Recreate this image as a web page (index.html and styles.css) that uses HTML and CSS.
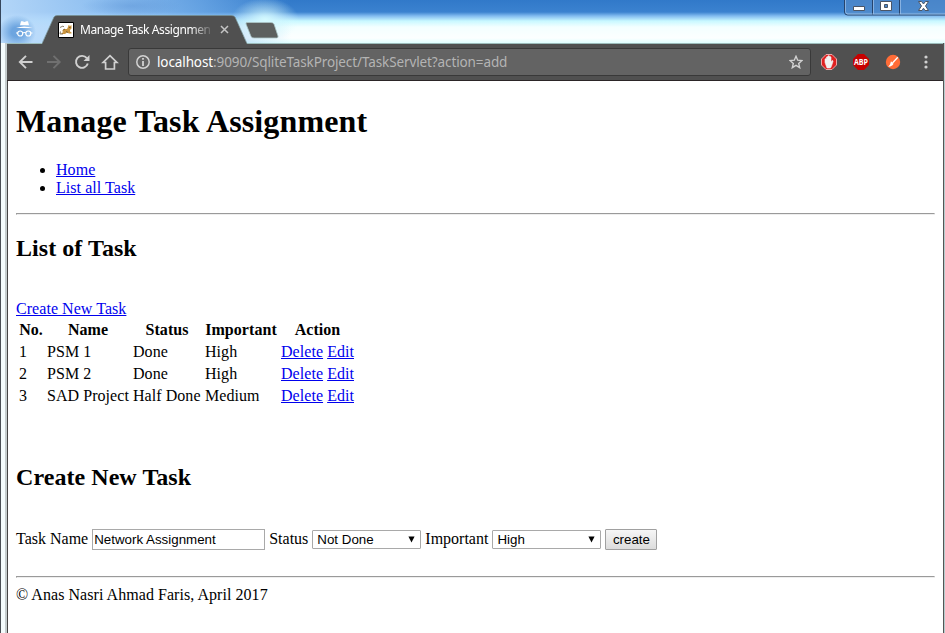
FILE: index.html
```html
<!DOCTYPE html>
<html lang="en">
<head>
<meta charset="utf-8">
<title>Manage Task Assignment</title>
<link rel="stylesheet" href="styles.css">
</head>
<body>
<div class="window">
  <header class="titlebar">
    <svg class="incognito" width="17" height="18" viewBox="0 0 17 18"><path d="M5 1.2h1.6l1.9.7L10.400 1.200H12l1 4H4z" fill="#fff"/><path d="M0 8q8-3 16.500 0z" fill="#fff"/><g fill="none" stroke="#fff" stroke-width="1.200"><circle cx="4.200" cy="13.500" r="2.500"/><circle cx="12.300" cy="13.500" r="2.500"/><path d="M6.500 13q1.800-1 3.500 0M0 13h2M14.500 13h2"/></g></svg>
    <div class="tab">
      <svg class="tab-shape" width="206" height="29" viewBox="0 0 206 29"><path d="M0 29L12 2Q13 .5 15 .5H189Q192 .5 193 2L205 29z" fill="#505050"/><path d="M0 28.500L12 2Q13 .5 15 .5H189Q192 .5 193 2L205 28.500" fill="none" stroke="#759092" stroke-width=".7"/></svg>
      <svg class="favicon" width="16" height="16" viewBox="0 0 16 16"><path fill="#fff" stroke="#000" d="M.5.5h15v15H.5z"/><path d="M4 9l2-2h3l1-2 .5-2 1.200.8h1L13.500 3v3.500L12 8v1.500l1.500 1v1H11L9 10.500 7 12H3.500v-1l2-1z" fill="#cb953e"/><path d="M2 5.500l3-1.500 1 1M2.500 9.500L2 12h3M5 8l2-1M8 9.500l2 1M11 5.500h1.500" stroke="#59472b" stroke-width=".7" fill="none"/></svg>
      <span class="tab-title">Manage Task Assignmen</span>
      <svg class="tab-close" width="9" height="9" viewBox="0 0 9 9"><path d="M1 1l7 7M8 1L1 8" stroke="#c4c4c4" stroke-width="1.500"/></svg>
    </div>
    <svg class="new-tab" width="34" height="17" viewBox="0 0 34 17"><path d="M2 .5H26Q28 .5 29 2L33 14Q33.500 16 31.500 16H9Q7 16 6 14.500L1 2Q.5 .5 2 .5z" fill="#5d605f" stroke="#adc8c9" stroke-width=".8"/></svg>
    <div class="controls">
      <svg width="101" height="16" viewBox="0 0 101 16"><path d="M.5 0v12q0 3 3 3H102V0z" fill="#5c8fcb" fill-opacity=".55"/><path d="M.5 0v12q0 3 3 3H102M28.500 0v15M55.500 0v15" fill="none" stroke="#26446d"/><path d="M1.500 0v11.500q0 2.500 2.500 2.500H102M29.500 0v14M56.500 0v14" fill="none" stroke="#a7c8ec" stroke-opacity=".65"/><g fill="#fff" stroke="#4b5566"><path d="M9.500 6.500h11v4h-11z"/><path fill-rule="evenodd" d="M36.500 1.500h11v9h-11zM40.500 4.500v3h3v-3z"/><path d="M74.500 1.500h3l2 2.500 2-2.500h3L81.500 6l3 4.500h-3.500l-1.500-2.300-1.500 2.300h-3.500l3-4.500z"/></g></svg>
    </div>
  </header>
  <div class="frame">
    <nav class="toolbar">
      <svg class="navicons" width="102" height="20" viewBox="0 0 102 20"><g fill="none" stroke="#d0d0d0" stroke-width="1.900"><path d="M15.500 10H3M9 3.800L2.800 10 9 16.200"/><path stroke="#707070" d="M30 10h12.500M36.500 3.800l6.200 6.200-6.200 6.200"/><path d="M69.800 6.200A6 6 0 1 0 70.800 11.500"/><path stroke-width="1.700" d="M88.600 10.500V17h8.800v-6.500h2.500L93 3.600l-6.900 6.900z"/></g><path d="M72.500 3v6h-6z" fill="#d0d0d0"/></svg>
      <div class="address">
        <svg width="14" height="14" viewBox="0 0 14 14"><circle cx="7" cy="7" r="6.200" fill="none" stroke="#d2d2d2" stroke-width="1.500"/><path d="M7 3v1.800M7 6v5" stroke="#d2d2d2" stroke-width="1.800"/></svg>
        <span class="url"><b>localhost</b>:9090/SqliteTaskProject/TaskServlet?action=add</span>
        <svg class="star" width="14" height="14" viewBox="0 0 14 14"><path d="M7 1.300l1.700 3.900 4.200.4-3.200 2.800 1 4.300L7 10.400l-3.700 2.300 1-4.300L1.100 5.600l4.200-.4z" fill="none" stroke="#d2d2d2" stroke-width="1.400"/></svg>
      </div>
      <svg class="ext" width="16" height="16" viewBox="0 0 16 16"><path d="M5 .5h6L15.500 5v6L11 15.500H5L.5 11V5z" fill="#df2020" stroke="#eda3a3"/><path d="M4 8.500V5q.8-1 1.500 0V3q.8-1 1.500 0V2q.8-.9 1.500 0v1q.8-1 1.500 0v5l1.200-1.500q1 0 .8 1L10.500 12l-1 2H6z" fill="#f2f2f2" stroke="#f2f2f2" stroke-width=".6"/></svg>
      <svg class="ext" width="16" height="16" viewBox="0 0 16 16"><path d="M5 0h6l5 5v6l-5 5H5l-5-5V5z" fill="#c60000"/><text class="abp" x="1" y="11" textLength="14" lengthAdjust="spacingAndGlyphs">ABP</text></svg>
      <svg class="ext" width="16" height="16" viewBox="0 0 16 16"><circle cx="8" cy="8" r="7.200" fill="#ff6c37"/><path d="M12.800 3.200L7.500 9" stroke="#fff" stroke-width="1.300"/><path d="M6 7.300l2.500 2.500Q7.500 12.500 3.200 12.800L5 10.500z" fill="#fff"/></svg>
      <svg class="more" width="4" height="14" viewBox="0 0 4 14" fill="#d0d0d0"><circle cx="2" cy="2" r="1.600"/><circle cx="2" cy="7" r="1.600"/><circle cx="2" cy="12" r="1.600"/></svg>
    </nav>
    <main class="page">
      <h1>Manage Task Assignment</h1>
      <ul>
        <li><a href="#">Home</a></li>
        <li><a href="#">List all Task</a></li>
      </ul>
      <hr>
      <h2>List of Task</h2>
      <br>
      <a href="#">Create New Task</a>
      <table>
        <colgroup><col class="no"><col class="task"><col class="state"><col class="priority"><col class="action"></colgroup>
        <tr><th>No.</th><th>Name</th><th>Status</th><th>Important</th><th>Action</th></tr>
        <tr><td>1</td><td>PSM 1</td><td>Done</td><td>High</td><td><a href="#">Delete</a> <a href="#">Edit</a></td></tr>
        <tr><td>2</td><td>PSM 2</td><td>Done</td><td>High</td><td><a href="#">Delete</a> <a href="#">Edit</a></td></tr>
        <tr><td>3</td><td>SAD Project</td><td>Half Done</td><td>Medium</td><td><a href="#">Delete</a> <a href="#">Edit</a></td></tr>
      </table>
      <br><br>
      <h2>Create New Task</h2>
      <br>
      <form class="task-form">
        <label for="name">Task Name</label>
        <input id="name" type="text" value="Network Assignment">
        <label for="status">Status</label>
        <span class="select"><select id="status"><option>Not Done</option></select><svg width="7" height="7" viewBox="0 0 8 7"><path d="M.5 0h7L4 7z"/></svg></span>
        <label for="important">Important</label>
        <span class="select"><select id="important"><option>High</option></select><svg width="7" height="7" viewBox="0 0 8 7"><path d="M.5 0h7L4 7z"/></svg></span>
        <button type="button">create</button>
      </form>
      <hr class="footer-rule">
      <footer>© Anas Nasri Ahmad Faris, April 2017</footer>
    </main>
  </div>
</div>
</body>
</html>
```
FILE: styles.css
```css
* { box-sizing: border-box; }
body { margin: 0; overflow: hidden; }
.window {
  width: 945px; height: 633px;
  display: flex; flex-direction: column;
  background: linear-gradient(90deg, #4a4f55 0 1px, #f4fcfd 1px 5px, #c4cccd 5px 7px, transparent 7px), #b5cccd;
}
.titlebar {
  position: relative;
  height: 43px; flex: none;
  display: flex; align-items: flex-start;
  border-left: 1px solid #35465c;
  background:
    radial-gradient(ellipse 19px 17px at 16px 32px, rgba(105,162,222,.95) 0 30%, transparent 100%),
    radial-gradient(ellipse 34px 22px at 264px 20px, #d5faff 0, transparent 100%),
    radial-gradient(ellipse 50px 10px at 130px 6px, rgba(95,150,215,.5) 0, transparent 100%),
    linear-gradient(90deg, rgba(185,218,250,.95) 0, rgba(165,208,250,.8) 100px, rgba(130,185,240,.6) 200px, transparent 290px),
    linear-gradient(#3179c9 0, #3b82cf 12px, #83bcf0 16px, #c8f8ff 21px, #f3ffff 27px, #fcffff 38px, #e0ffff 43px);
}
.incognito { margin: 20px 0 0 15px; width: 17px; }
.tab {
  position: relative;
  width: 206px; height: 29px;
  margin: 15px 0 0 9px;
  display: flex; align-items: center;
}
.tab-shape { position: absolute; left: 0; top: 0; }
.favicon { position: relative; margin: 0 0 0 16px; }
.tab-title {
  position: relative;
  width: 132px; margin-left: 6px;
  white-space: nowrap;
  font: 12px/16px "Noto Sans", sans-serif;
  letter-spacing: -.41px;
  color: #fff;
  -webkit-mask-image: linear-gradient(90deg, #000 110px, transparent 134px);
  mask-image: linear-gradient(90deg, #000 110px, transparent 134px);
}
.tab-close { position: relative; margin-left: 8px; }
.new-tab { margin: 22px 0 0 -3px; }
.controls { margin-left: auto; height: 16px; width: 101px; }
.frame {
  flex: 1;
  display: flex; flex-direction: column;
  margin: 0 2px 0 7px;
  background: #fff;
  border-left: 1px solid #444;
  box-shadow: 1px 0 #555;
}
.toolbar {
  height: 38px; flex: none;
  display: flex; align-items: center;
  margin-left: -1px;
  background: #505050;
  border-top: 1px solid #9cbcbb;
  border-bottom: 1px solid #2b2527;
}
.navicons { margin-left: 10px; }
.address {
  width: 683px; height: 28px;
  margin-left: 9px; padding: 0 7px 0 7px;
  display: flex; align-items: center;
  background: #636363;
  border: 1px solid #393939;
  border-radius: 3px;
}
.url { margin-left: 7px; font: 13.500px/20px "Noto Sans", sans-serif; letter-spacing: -.11px; color: #b4b4b4; white-space: nowrap; }
.url b { font-weight: 400; color: #fff; }
.star { margin-left: auto; }
.ext { margin-left: 10px; overflow: visible; }
.ext + .ext { margin-left: 16px; }
.abp { font: bold 8.500px "Open Sans", sans-serif; fill: #fff; }
.more { margin-left: 23px; }
.page {
  flex: 1;
  display: flow-root;
  padding: 1px 8px 0;
  font: 16px/18px "Liberation Serif", serif;
  letter-spacing: .05px;
  color: #000;
}
h1 { font-size: 32px; line-height: 37px; margin: 21px 0; letter-spacing: .12px; }
h2 { font-size: 24px; line-height: 27px; margin: 20px 0; letter-spacing: .06px; }
ul { margin: 0 0 16px; padding-left: 40px; }
hr { margin: 0; height: 2px; border: 1px solid #9a9a9a; border-bottom-color: #eee; border-right-color: #eee; }
a { color: #00e; }
table { border-spacing: 2px; table-layout: fixed; width: 341px; white-space: nowrap; }
.no { width: 26px; }
.task { width: 84px; }
.state { width: 70px; }
.priority { width: 74px; }
.action { width: 75px; }
td, th { padding: 1px; }
.task-form { display: flex; align-items: center; gap: 4px; height: 21px; white-space: nowrap; letter-spacing: 0; }
.task-form label { padding-bottom: 1px; }
input, select, button { font: 13.333px "Liberation Sans", sans-serif; color: #000; margin: 0; }
input { width: 173px; height: 21px; padding: 1px; border: 1px solid #a9a9a9; }
.select { position: relative; width: 109px; height: 19px; display: flex; }
.select select {
  -webkit-appearance: none; appearance: none;
  width: 100%; height: 19px; padding: 0 4px;
  background: #fff; border: 1px solid #a9a9a9; border-radius: 1px;
}
.select svg { position: absolute; right: 6px; top: 6px; }
button { width: 52px; height: 21px; padding: 0; border: 1px solid #a0a0a0; border-radius: 1px; background: linear-gradient(#f6f6f6, #dcdcdc); }
.footer-rule { margin-top: 26px; }
footer { margin-top: 8px; }
```
